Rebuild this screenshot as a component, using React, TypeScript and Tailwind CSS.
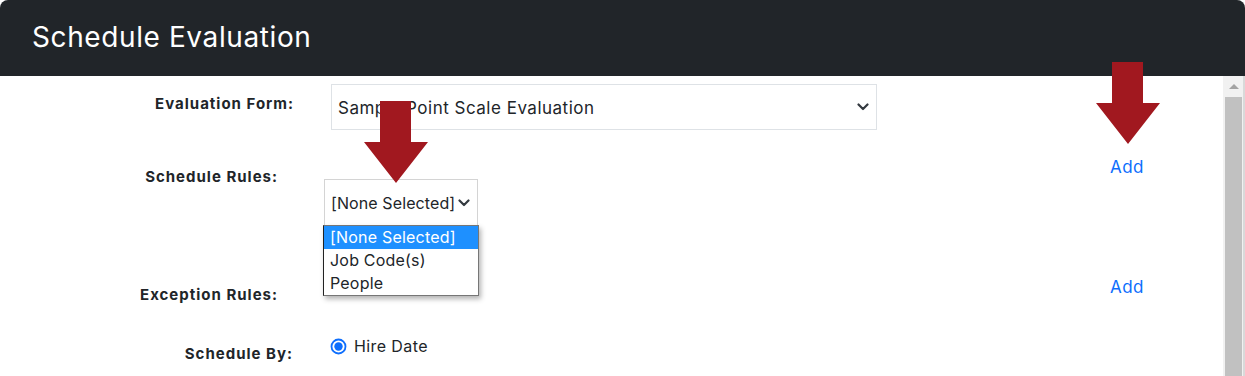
import React from 'react';

const font = { fontFamily: 'Inter, "Noto Sans", sans-serif' };

function Chevron() {
  return (
    <svg width="12" height="8" viewBox="0 0 12 8" className="shrink-0">
      <path d="M1.5 1.5 6 6l4.5-4.5" fill="none" stroke="#343a40" strokeWidth="2.2" strokeLinecap="round" strokeLinejoin="round" />
    </svg>
  );
}

function DownArrow({ className }: { className: string }) {
  // big red callout arrow
  return (
    <svg width="64" height="82" viewBox="0 0 64 82" className={className}>
      <polygon points="16,0 47,0 47,41 64,41 32,82 0,41 16,41" fill="#a1181f" />
    </svg>
  );
}

export default function App() {
  return (
    <div className="relative w-[1245px] h-[376px] overflow-hidden bg-white text-[#212529]" style={font}>
      {/* Header */}
      <div className="h-[76px] bg-[#212529] rounded-t-[8px] flex items-center pl-[32px] pb-[2px]">
        <h1 className="text-white text-[28px] leading-none tracking-[0.6px]">Schedule Evaluation</h1>
      </div>

      <div className="flex h-[300px]">
        {/* Form body */}
        <div className="flex-1 flex flex-col pt-[8px]">
          {/* Evaluation form */}
          <div className="flex items-start">
            <div className="w-[300px] text-right pr-[6px] pt-[10px] text-[15px] leading-[20px] font-bold tracking-[1px]">Evaluation Form:</div>
            <div className="ml-[31px] w-[546px] h-[46px] border border-[#dee2e6] flex items-center justify-between pl-[6px] pr-[7px]">
              <span className="text-[17px] leading-[20px] tracking-[0.5px] pt-[2px]">Sample Point Scale Evaluation</span>
              <Chevron />
            </div>
          </div>

          {/* Schedule rules */}
          <div className="flex items-start mt-[27px] h-[70px]">
            <div className="w-[300px] text-right pr-[22px] pt-[10px] text-[15px] leading-[20px] font-bold tracking-[1px]">Schedule Rules:</div>
            <div className="relative ml-[24px] mt-[22px]">
              <div className="w-[154px] h-[47px] border border-[#d4d4d4] flex items-center justify-between pl-[6px] pr-[7px]">
                <span className="text-[16px] tracking-[0.1px]">[None Selected]</span>
                <Chevron />
              </div>
              <ul className="absolute left-[-1px] top-[46px] w-[156px] bg-white border border-[#767676] border-l-[#222] shadow-[2px_3px_5px_rgba(0,0,0,0.3)] text-[16px] leading-[23px] tracking-[0.2px] z-10">
                <li className="bg-[#1e90ff] text-white px-[6px]">[None Selected]</li>
                <li className="px-[6px]">Job Code(s)</li>
                <li className="px-[6px]">People</li>
              </ul>
            </div>
            <a className="ml-auto mr-[79px] text-[17px] leading-[20px] text-[#0d6efd] tracking-[0.5px]">Add</a>
          </div>

          {/* Exception rules */}
          <div className="flex items-start mt-[50px] h-[28px]">
            <div className="w-[300px] text-right pr-[22px] pt-[8px] text-[15px] leading-[20px] font-bold tracking-[1px]">Exception Rules:</div>
            <a className="ml-auto mr-[79px] text-[17px] leading-[20px] text-[#0d6efd] tracking-[0.5px]">Add</a>
          </div>

          {/* Schedule by */}
          <div className="flex items-start mt-[31px]">
            <div className="w-[300px] text-right pr-[7px] pt-[8px] text-[15px] leading-[20px] font-bold tracking-[1px]">Schedule By:</div>
            <label className="ml-[30px] flex items-center gap-[7px] text-[16px] leading-[20px] tracking-[0.4px]">
              <svg width="17" height="17" viewBox="0 0 17 17">
                <circle cx="8.5" cy="8.5" r="7" fill="white" stroke="#0d6efd" strokeWidth="1.8" />
                <circle cx="8.5" cy="8.5" r="4.2" fill="#0d6efd" />
              </svg>
              Hire Date
            </label>
          </div>
        </div>

        {/* Scrollbar */}
        <div className="w-[22px] bg-[#f1f1f1] flex flex-col items-start pl-[2px] border-r-[2px] border-[#d9d9d9]">
          <div className="h-[21px] w-[17px] flex items-center justify-center">
            <div className="w-0 h-0 border-l-[5px] border-r-[5px] border-b-[5px] border-l-transparent border-r-transparent border-b-[#a3a3a3]" />
          </div>
          <div className="flex-1 w-[17px] bg-[#c1c1c1]" />
        </div>
      </div>

      {/* Callout arrows */}
      <DownArrow className="absolute left-[364px] top-[101px] z-20" />
      <DownArrow className="absolute left-[1096px] top-[62px] z-20" />
    </div>
  );
}
